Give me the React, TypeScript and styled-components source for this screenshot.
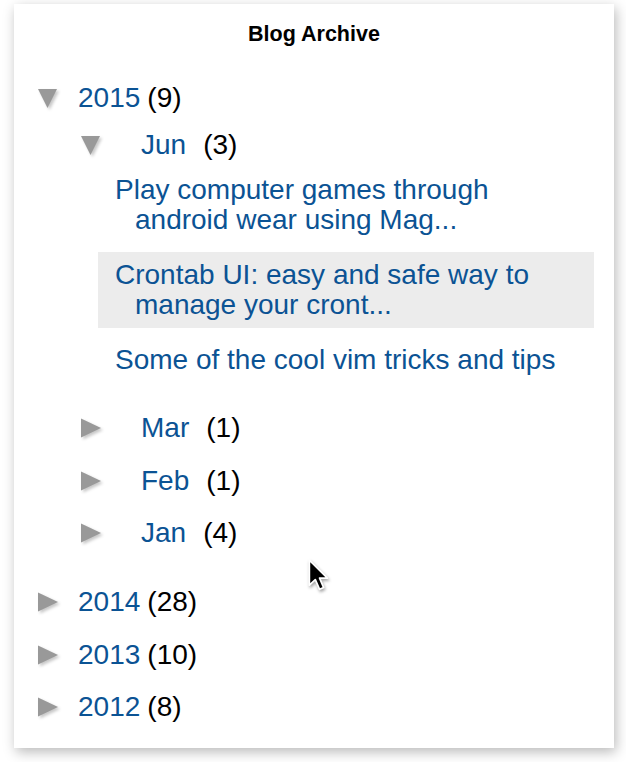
import React from "react";
import styled, { createGlobalStyle } from "styled-components";

const GlobalStyle = createGlobalStyle`
  html, body {
    margin: 0;
    padding: 0;
    background: #ffffff;
  }
  body {
    font-family: "Liberation Sans", Arial, Helvetica, sans-serif;
  }
`;

const Page = styled.div`
  position: relative;
  width: 626px;
  height: 762px;
  padding: 4px 0 0 14px;
  box-sizing: border-box;
`;

const Card = styled.section`
  width: 600px;
  box-sizing: border-box;
  background: #fff;
  padding: 17px 20px 14px 24px;
  box-shadow: 2px 4px 12px rgba(0, 0, 0, 0.28);
`;

const Heading = styled.h2`
  margin: 0 0 25px -4px;
  font-size: 21.5px;
  line-height: 26px;
  font-weight: bold;
  text-align: center;
  color: #000;
`;

const List = styled.ul<{ $indent?: number; $top?: number; $bottom?: number }>`
  list-style: none;
  margin: ${(p) => p.$top ?? 0}px 0 ${(p) => p.$bottom ?? 0}px ${(p) => p.$indent ?? 0}px;
  padding: 0;
`;

const Item = styled.li`
  margin: 0;
  padding: 0;
`;

const Row = styled.div<{ $open?: boolean }>`
  display: flex;
  align-items: center;
  height: 30px;
  padding: 11px 0 ${(p) => (p.$open ? 0 : 11.5)}px 0;
  font-size: 28px;
  line-height: 30px;
  white-space: nowrap;
`;

const Toggle = styled.span<{ $w: number }>`
  display: inline-flex;
  align-items: center;
  width: ${(p) => p.$w}px;
  flex: none;
  height: 30px;
  svg {
    display: block;
    filter: drop-shadow(2px 2px 1.5px rgba(0, 0, 0, 0.22));
  }
`;

const Link = styled.a`
  color: #0b5394;
  text-decoration: none;
`;

const Count = styled.span<{ $gap: number }>`
  color: #000;
  margin-left: ${(p) => p.$gap}px;
`;

const PostList = styled.ul`
  list-style: none;
  margin: 7px 0 19px 17px;
  padding: 0;
  display: flex;
  flex-direction: column;
  gap: 9px;
`;

const Post = styled.li<{ $active?: boolean }>`
  padding: 8px 10px 8px 37px;
  text-indent: -20px;
  font-size: 28px;
  line-height: 30px;
  background: ${(p) => (p.$active ? "#ececec" : "transparent")};
`;

const Cursor = styled.svg`
  position: absolute;
  left: 307px;
  top: 558px;
  filter: drop-shadow(1px 2px 1.5px rgba(0, 0, 0, 0.35));
`;

const Arrow = ({ open }: { open: boolean }) =>
  open ? (
    <svg width="20" height="20" viewBox="0 0 20 20">
      <polygon points="0,1 19,1 9.5,20" fill="#999" />
    </svg>
  ) : (
    <svg width="20" height="20" viewBox="0 0 20 20">
      <polygon points="0,0.5 20,10 0,19.5" fill="#999" />
    </svg>
  );

type Month = { name: string; count: number; posts?: { title: string; active?: boolean }[] };
type Year = { year: string; count: number; months?: Month[] };

const data: Year[] = [
  {
    year: "2015",
    count: 9,
    months: [
      {
        name: "Jun",
        count: 3,
        posts: [
          { title: "Play computer games through android wear using Mag..." },
          { title: "Crontab UI: easy and safe way to manage your cront...", active: true },
          { title: "Some of the cool vim tricks and tips" },
        ],
      },
      { name: "Mar", count: 1 },
      { name: "Feb", count: 1 },
      { name: "Jan", count: 4 },
    ],
  },
  { year: "2014", count: 28 },
  { year: "2013", count: 10 },
  { year: "2012", count: 8 },
];

export default function App() {
  return (
    <>
      <GlobalStyle />
      <Page>
        <Card>
          <Heading>Blog Archive</Heading>
          <List>
            {data.map((y) => {
              const open = !!y.months;
              return (
                <Item key={y.year}>
                  <Row $open={open}>
                    <Toggle $w={40}>
                      <Arrow open={open} />
                    </Toggle>
                    <Link href="#">{y.year}</Link>
                    <Count $gap={7}>({y.count})</Count>
                  </Row>
                  {y.months && (
                    <List $indent={43} $top={6} $bottom={16.5}>
                      {y.months.map((m) => {
                        const mOpen = !!m.posts;
                        return (
                          <Item key={m.name}>
                            <Row $open={mOpen}>
                              <Toggle $w={60}>
                                <Arrow open={mOpen} />
                              </Toggle>
                              <Link href="#">{m.name}</Link>
                              <Count $gap={17}>({m.count})</Count>
                            </Row>
                            {m.posts && (
                              <PostList>
                                {m.posts.map((p) => (
                                  <Post key={p.title} $active={p.active}>
                                    <Link href="#">{p.title}</Link>
                                  </Post>
                                ))}
                              </PostList>
                            )}
                          </Item>
                        );
                      })}
                    </List>
                  )}
                </Item>
              );
            })}
          </List>
        </Card>
        <Cursor width="22" height="34" viewBox="0 0 14 21">
          <path
            d="M1.5 1 L1.5 17 L5.3 13.4 L8 19.6 L10.6 18.5 L8 12.5 L13 12.5 Z"
            fill="#000"
            stroke="#fff"
            strokeWidth="1.1"
            strokeLinejoin="round"
          />
        </Cursor>
      </Page>
    </>
  );
}
